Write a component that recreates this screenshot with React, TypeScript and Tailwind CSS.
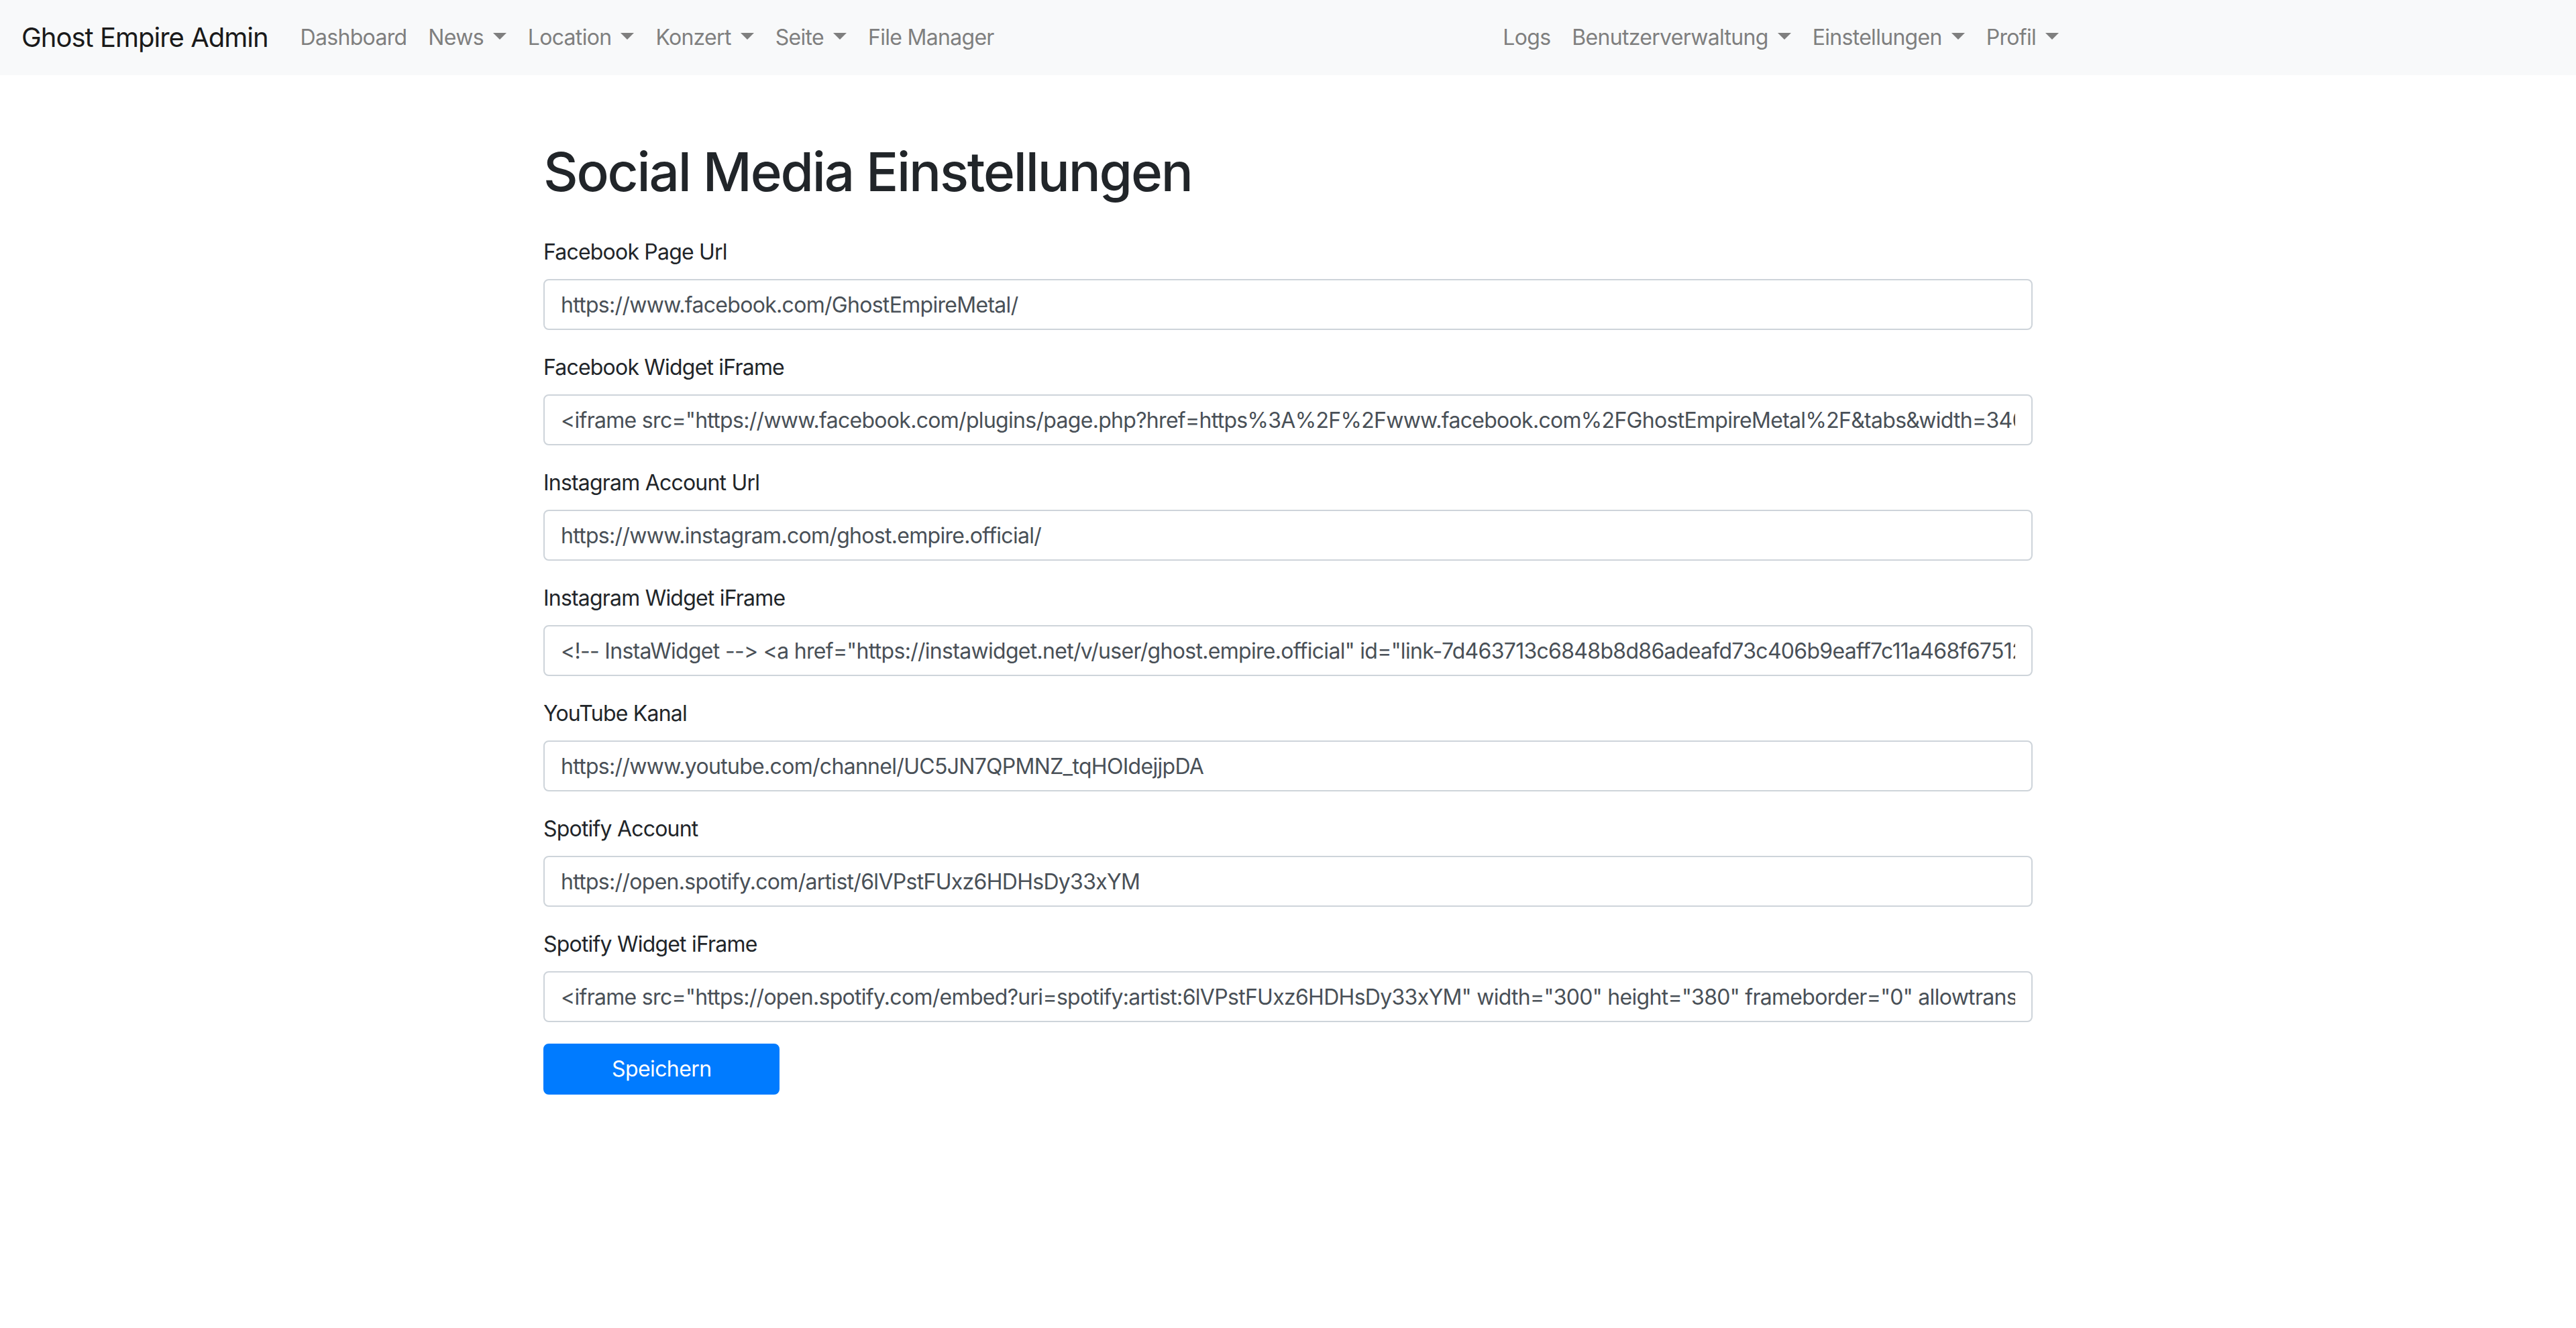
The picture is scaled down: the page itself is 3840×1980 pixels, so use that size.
import { useState } from "react";

type NavItem = {
    label: string;
    dropdown?: boolean;
};

const leftNav: NavItem[] = [
    { label: "Dashboard" },
    { label: "News", dropdown: true },
    { label: "Location", dropdown: true },
    { label: "Konzert", dropdown: true },
    { label: "Seite", dropdown: true },
    { label: "File Manager" },
];

const rightNav: NavItem[] = [
    { label: "Logs" },
    { label: "Benutzerverwaltung", dropdown: true },
    { label: "Einstellungen", dropdown: true },
    { label: "Profil", dropdown: true },
];

type Field = {
    id: string;
    label: string;
    value: string;
};

const initialFields: Field[] = [
    {
        id: "facebookUrl",
        label: "Facebook Page Url",
        value: "https://www.facebook.com/GhostEmpireMetal/",
    },
    {
        id: "facebookWidget",
        label: "Facebook Widget iFrame",
        value: '<iframe src="https://www.facebook.com/plugins/page.php?href=https%3A%2F%2Fwww.facebook.com%2FGhostEmpireMetal%2F&tabs&width=340&height=500&small_header=false&adapt_container_width=true&hide_cover=false&show_facepile=true&appId" width="340" height="500" style="border:none;overflow:hidden" scrolling="no" frameborder="0" allowTransparency="true" allow="encrypted-media"></iframe>',
    },
    {
        id: "instagramUrl",
        label: "Instagram Account Url",
        value: "https://www.instagram.com/ghost.empire.official/",
    },
    {
        id: "instagramWidget",
        label: "Instagram Widget iFrame",
        value: '<!-- InstaWidget --> <a href="https://instawidget.net/v/user/ghost.empire.official" id="link-7d463713c6848b8d86adeafd73c406b9eaff7c11a468f67512b8e2a1f0d2c3b4">@ghost.empire.official</a> <script src="https://instawidget.net/js/instawidget.js?u=7d463713c6848b8d86adeafd73c406b9eaff7c11a468f675&width=300px"></script>',
    },
    {
        id: "youtube",
        label: "YouTube Kanal",
        value: "https://www.youtube.com/channel/UC5JN7QPMNZ_tqHOIdejjpDA",
    },
    {
        id: "spotifyUrl",
        label: "Spotify Account",
        value: "https://open.spotify.com/artist/6lVPstFUxz6HDHsDy33xYM",
    },
    {
        id: "spotifyWidget",
        label: "Spotify Widget iFrame",
        value: '<iframe src="https://open.spotify.com/embed?uri=spotify:artist:6lVPstFUxz6HDHsDy33xYM" width="300" height="380" frameborder="0" allowtransparency="true" allow="encrypted-media"></iframe>',
    },
];

const Caret = () => (
    <span className="ml-[14px] inline-block align-[8px] border-t-[10px] border-x-[10px] border-t-current border-x-transparent border-b-0" />
);

const NavLink = ({ item }: { item: NavItem }) => (
    <a
        href="#"
        className="px-[16px] py-[16px] text-[32px] leading-[48px] tracking-[-0.7px] text-[#7f7f7f] whitespace-nowrap"
    >
        {item.label}
        {item.dropdown && <Caret />}
    </a>
);

const Navbar = () => (
    <nav className="flex items-center bg-[#f8f9fa] px-[32px] py-[16px] h-[112px]">
        <a
            href="#"
            className="mr-[32px] py-[10px] text-[40px] leading-[60px] tracking-[-1px] text-[#1a1a1a] whitespace-nowrap"
        >
            Ghost Empire Admin
        </a>
        <div className="flex">
            {leftNav.map((item) => (
                <NavLink key={item.label} item={item} />
            ))}
        </div>
        <div className="flex-1" />
        <div className="flex mr-[723px]">
            {rightNav.map((item) => (
                <NavLink key={item.label} item={item} />
            ))}
        </div>
    </nav>
);

const App = () => {
    const [fields, setFields] = useState(initialFields);

    const updateField = (id: string, value: string) => {
        setFields((prev) =>
            prev.map((f) => (f.id === id ? { ...f, value } : f))
        );
    };

    return (
        <div className="min-h-[1980px] bg-white text-[#212529] font-['Inter','Liberation_Sans',sans-serif] [font-feature-settings:'calt'_0,'liga'_0]">
            <Navbar />
            <main className="w-[2220px] mx-auto mt-[96px]">
                <h1 className="text-[80px] leading-[96px] font-medium mb-[48px] tracking-[-2.2px]">
                    Social Media Einstellungen
                </h1>
                <form onSubmit={(e) => e.preventDefault()}>
                    {fields.map((field) => (
                        <div key={field.id} className="mb-[32px]">
                            <label
                                htmlFor={field.id}
                                className="block mb-[16px] text-[32px] leading-[48px] tracking-[-0.8px]"
                            >
                                {field.label}
                            </label>
                            <input
                                id={field.id}
                                type="text"
                                value={field.value}
                                onChange={(e) =>
                                    updateField(field.id, e.target.value)
                                }
                                className="block w-full h-[76px] px-[24px] py-[12px] text-[32px] leading-[48px] tracking-[-0.7px] text-[#495057] bg-white border-2 border-[#ced4da] rounded-[8px] outline-none [font-feature-settings:'calt'_0,'liga'_0]"
                            />
                        </div>
                    ))}
                    <button
                        type="submit"
                        className="h-[76px] px-[100px] text-[32px] leading-[48px] tracking-[-0.6px] text-white bg-[#007bff] border-2 border-[#007bff] rounded-[8px]"
                    >
                        Speichern
                    </button>
                </form>
            </main>
        </div>
    );
};

export default App;
